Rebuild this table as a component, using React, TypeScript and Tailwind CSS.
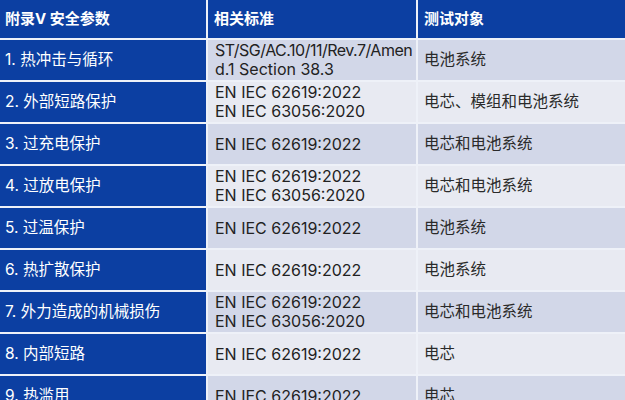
const rows: { item: string; std: string[]; target: string }[] = [
  { item: '1. 热冲击与循环', std: ['ST/SG/AC.10/11/Rev.7/Amen', 'd.1 Section 38.3'], target: '电池系统' },
  { item: '2. 外部短路保护', std: ['EN IEC 62619:2022', 'EN IEC 63056:2020'], target: '电芯、模组和电池系统' },
  { item: '3. 过充电保护', std: ['EN IEC 62619:2022'], target: '电芯和电池系统' },
  { item: '4. 过放电保护', std: ['EN IEC 62619:2022', 'EN IEC 63056:2020'], target: '电芯和电池系统' },
  { item: '5. 过温保护', std: ['EN IEC 62619:2022'], target: '电池系统' },
  { item: '6. 热扩散保护', std: ['EN IEC 62619:2022'], target: '电池系统' },
  { item: '7. 外力造成的机械损伤', std: ['EN IEC 62619:2022', 'EN IEC 63056:2020'], target: '电芯和电池系统' },
  { item: '8. 内部短路', std: ['EN IEC 62619:2022'], target: '电芯' },
  { item: '9. 热滥用', std: ['EN IEC 62619:2022'], target: '电芯' },
];

const font = { fontFamily: 'Inter, "Noto Sans CJK SC", sans-serif' };

export default function App() {
  return (
    <div className="w-[625px] h-[400px] overflow-hidden bg-[#eef1f8]" style={font}>
      <div className="grid grid-cols-[206px_208px_1fr] gap-[2px] text-[15.5px]">
        {/* header */}
        <div className="h-[38px] bg-[#0c3fa2] flex items-center pl-[5px] text-[15px] font-bold text-white">附录V 安全参数</div>
        <div className="h-[38px] bg-[#0c3fa2] flex items-center pl-[6px] text-[15px] font-bold text-white">相关标准</div>
        <div className="h-[38px] bg-[#0c3fa2] flex items-center pl-[6px] text-[15px] font-bold text-white">测试对象</div>

        {rows.map((r, i) => {
          const shade = i % 2 === 0 ? 'bg-[#d2d7e8]' : 'bg-[#e8eaf2]';
          return [
            <div key={`a${i}`} className="h-[40px] bg-[#0c3fa2] flex items-center pl-[5px] text-white">
              {r.item}
            </div>,
            <div key={`b${i}`} className={`h-[40px] ${shade} flex flex-col justify-center pl-[7px] text-[16px] text-[#222] leading-[19px] whitespace-nowrap overflow-hidden`}>
              {r.std.map((s) => (
                <span key={s} className={s.startsWith('ST') ? 'tracking-[-0.5px]' : ''}>{s}</span>
              ))}
            </div>,
            <div key={`c${i}`} className={`h-[40px] ${shade} flex items-center pl-[6px] text-[#2a2a2a]`}>
              {r.target}
            </div>,
          ];
        })}
      </div>
    </div>
  );
}
